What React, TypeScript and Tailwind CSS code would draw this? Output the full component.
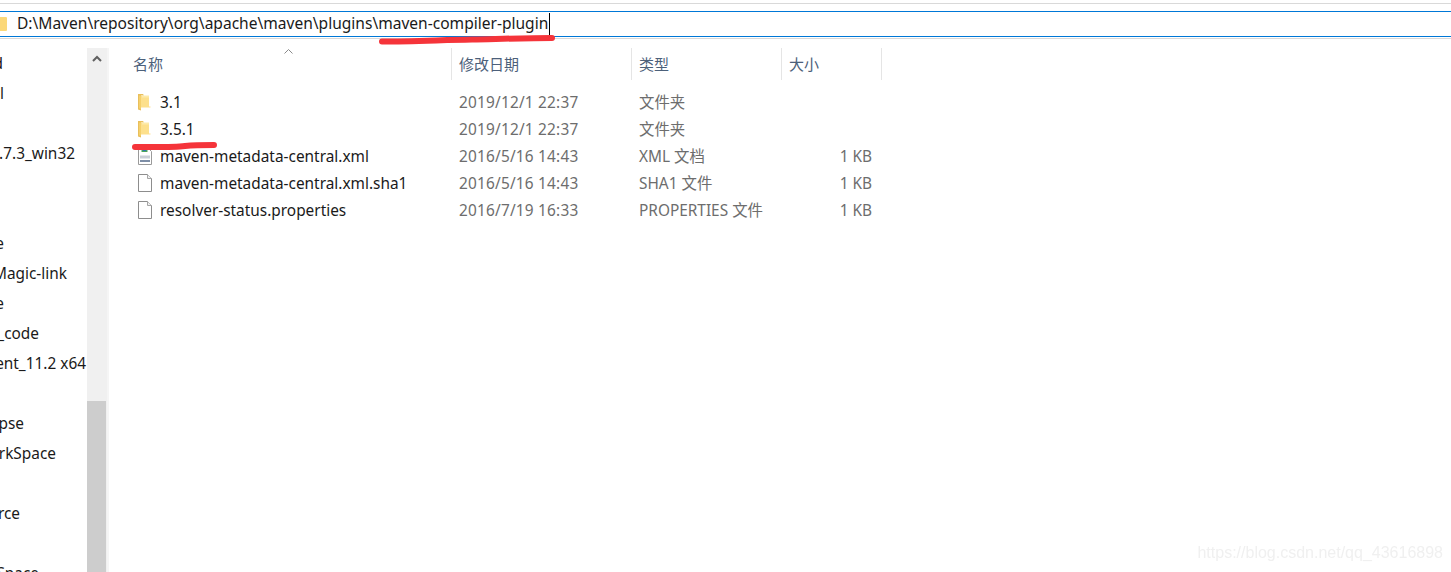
const UI_FONT = "font-['Noto_Sans','Noto_Sans_CJK_SC',sans-serif]";

// only what shows of the tree: labels are anchored by their right end and
// run out past the window's left edge
const TREE = [
  { label: "d", cls: "w-[3px]" },
  { label: "l", cls: "w-[4px]" },
  { label: "", cls: "" },
  { label: ".7.3_win32", cls: "w-[75px]" },
  { label: "", cls: "" },
  { label: "", cls: "" },
  { label: "e", cls: "w-[4px]" },
  { label: "Magic-link", cls: "w-[67px]" },
  { label: "e", cls: "w-[4px]" },
  { label: "_code", cls: "w-[39px]" },
  { label: "ent_11.2 x64", cls: "w-[86px]" },
  { label: "", cls: "" },
  { label: "pse", cls: "w-[24px]" },
  { label: "rkSpace", cls: "w-[56px]" },
  { label: "", cls: "" },
  { label: "rce", cls: "w-[20px]" },
  { label: "", cls: "" },
  { label: "Space", cls: "w-[39px]" },
];

const COLUMNS = [
  { label: "修改日期", cls: "w-[180px]" },
  { label: "类型", cls: "w-[150px]" },
  { label: "大小", cls: "w-[100px]" },
];

const FILES = [
  { name: "3.1", date: "2019/12/1 22:37", type: "文件夹", size: "", icon: "folder" },
  { name: "3.5.1", date: "2019/12/1 22:37", type: "文件夹", size: "", icon: "folder" },
  { name: "maven-metadata-central.xml", date: "2016/5/16 14:43", type: "XML 文档", size: "1 KB", icon: "xml" },
  { name: "maven-metadata-central.xml.sha1", date: "2016/5/16 14:43", type: "SHA1 文件", size: "1 KB", icon: "file" },
  { name: "resolver-status.properties", date: "2016/7/19 16:33", type: "PROPERTIES 文件", size: "1 KB", icon: "file" },
];

function FolderIcon() {
  return (
    <svg width="13" height="18" viewBox="0 0 13 18" className="block">
      <path d="M0 1h5l1 1.500h-3l0 15-3-1z" fill="#e9bf5c" />
      <path d="M1 2.500h2v13.500l-2-.8z" fill="#f5d06c" />
      <path d="M3 3h8v10.500h1.500v1h-9.500z" fill="#fde08c" />
      <path d="M4 2.500h7v2h-7z" fill="#fdeaaa" />
    </svg>
  );
}

function FileIcon() {
  return (
    <svg width="14" height="18" viewBox="0 0 14 18" className="block">
      <path d="M.5.5h9l4 4v13h-13z" fill="#fff" stroke="#8d8d8d" />
      <path d="M9.500.5v4h4" fill="#f1f1f1" stroke="#a5a5a5" />
    </svg>
  );
}

function XmlIcon() {
  return (
    <svg width="14" height="18" viewBox="0 0 14 18" className="block">
      <path d="M.5.5h9l4 4v13h-13z" fill="#fff" stroke="#9a9a9a" />
      <path d="M3.500 1h6v4h-6z" fill="#4aa35c" />
      <path d="M5 1h3v3h-3z" fill="#2f6fb6" />
      <path d="M2 8.500h10v3h-10z" fill="#c9ced6" />
      <path d="M2 13h10v2h-10z" fill="#7d8ea6" />
    </svg>
  );
}

function RowIcon({ kind }: { kind: string }) {
  if (kind === "folder") return <FolderIcon />;
  if (kind === "xml") return <XmlIcon />;
  return <FileIcon />;
}

export default function App() {
  return (
    <div className={`relative h-[572px] w-[1451px] overflow-hidden bg-white ${UI_FONT}`}>
      <div className="mt-[3px] h-px bg-[#d9d9d9]" />

      {/* Address bar */}
      <div className="mt-[7px] flex h-[26px] items-center border-y border-[#0078d7]">
        <div className="ml-[-7px] mr-[10px] h-[14px] w-[14px] rounded-[1px] bg-[#fbd879]" />
        <span className="text-[15.56px] leading-none text-[#1a1a1a]">D:\Maven\repository\org\apache\maven\plugins\maven-compiler-plugin</span>
        <span className="ml-px h-[22px] w-px bg-black" />
      </div>
      <div className="mt-px h-px bg-[#d9d9d9]" />

      <div className="mt-[9px] flex">
        {/* Folder tree */}
        <div className="h-[524px] w-[87px] overflow-hidden pt-px">
          {TREE.map((row, i) => (
            <div key={i} className={`flex h-[30px] justify-end whitespace-nowrap text-[15.4px] leading-[30px] text-[#1a1a1a] ${row.cls}`}>
              {row.label}
            </div>
          ))}
        </div>

        {/* Scrollbar */}
        <div className="flex h-[524px] w-[20px] flex-col bg-[#f0f0f0]">
          <div className="flex h-[17px] items-center justify-center pt-[3px]">
            <svg width="10" height="7" viewBox="0 0 10 7">
              <path d="M1 6l4-4 4 4" fill="none" stroke="#606060" strokeWidth="2" />
            </svg>
          </div>
          <div className="flex-1" />
          <div className="h-[171px] w-[19px] bg-[#cdcdcd]" />
        </div>
        <div className="h-[524px] w-[2px] bg-[#f5f5f5]" />

        {/* File list */}
        <div className="relative flex-1">
          <div className="flex h-[32px]">
            <div className="relative w-[342px] pl-[24px] text-[15px] leading-[32px] text-[#4c607a]">
              名称
              <svg width="9" height="5" viewBox="0 0 9 5" className="absolute left-[175px] top-[1px]">
                <path d="M.5 4.500l4-4 4 4" fill="none" stroke="#8a8a8a" />
              </svg>
            </div>
            {COLUMNS.map((col) => (
              <div key={col.label} className={`border-l border-[#e5e5e5] pl-[7px] text-[15px] leading-[32px] text-[#4c607a] ${col.cls}`}>
                {col.label}
              </div>
            ))}
            <div className="w-px bg-[#e5e5e5]" />
          </div>

          <div className="mt-[9px]">
            {FILES.map((file) => (
              <div key={file.name} className="flex h-[27px] items-center text-[15.4px]">
                <div className="flex w-[342px] items-center">
                  <div className="ml-[29px] mr-[8px] w-[14px]">
                    <RowIcon kind={file.icon} />
                  </div>
                  <span className="text-[#1a1a1a]">{file.name}</span>
                </div>
                <div className="w-[180px] pl-[8px] tracking-[0.2px] text-[#6d6d6d]">{file.date}</div>
                <div className="w-[150px] pl-[8px] text-[#6d6d6d]">{file.type}</div>
                <div className="w-[91px] text-right text-[#6d6d6d]">{file.size}</div>
              </div>
            ))}
          </div>
        </div>
      </div>

      {/* Red pen marks drawn over the screenshot */}
      <svg width="1451" height="572" viewBox="0 0 1451 572" className="pointer-events-none absolute left-0 top-0">
        <path d="M382 41.500c30 0 60-1.500 90-2 25-.5 55-1.500 80-1.500" fill="none" stroke="#f5343a" strokeWidth="6" strokeLinecap="round" />
        <path d="M135 147c18 0 38 .5 50-1 10-1 20-1 29-1" fill="none" stroke="#f5343a" strokeWidth="6" strokeLinecap="round" />
      </svg>

      {/* Blog watermark */}
      <div className="absolute bottom-[11px] right-[8px] font-['Liberation_Sans',sans-serif] text-[16px] leading-none text-[#f0f0f0] blur-[0.5px]">
        https://blog.csdn.net/qq_43616898
      </div>
    </div>
  );
}
